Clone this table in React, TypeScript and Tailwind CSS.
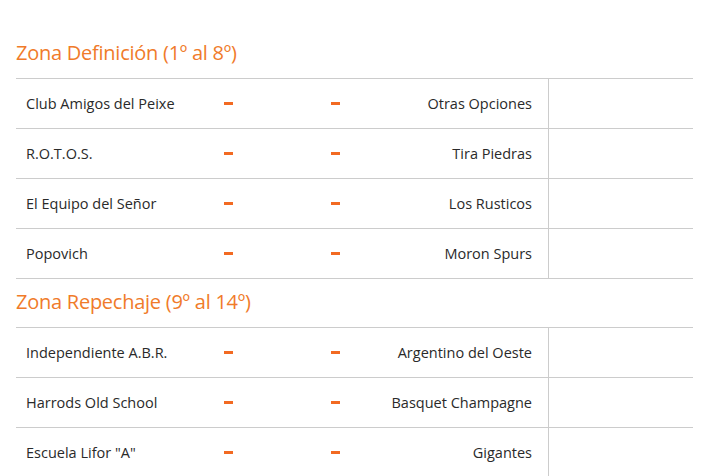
type Match = { home: string; away: string };

const zones: { title: string; matches: Match[] }[] = [
  {
    title: "Zona Definición (1º al 8º)",
    matches: [
      { home: "Club Amigos del Peixe", away: "Otras Opciones" },
      { home: "R.O.T.O.S.", away: "Tira Piedras" },
      { home: "El Equipo del Señor", away: "Los Rusticos" },
      { home: "Popovich", away: "Moron Spurs" },
    ],
  },
  {
    title: "Zona Repechaje (9º al 14º)",
    matches: [
      { home: "Independiente A.B.R.", away: "Argentino del Oeste" },
      { home: "Harrods Old School", away: "Basquet Champagne" },
      { home: "Escuela Lifor \"A\"", away: "Gigantes" },
    ],
  },
];

function Score() {
  return (
    <div className="flex items-center justify-center">
      <span className="block h-[3px] w-[9px] bg-[#f26a22]" aria-label="-" />
    </div>
  );
}

function Row({ home, away }: Match) {
  return (
    <div className="grid h-[50px] grid-cols-[190px_44px_63px_44px_191px_1fr] border-t border-[#cccccc] text-[14.5px] text-[#2a2a2a]">
      <div className="flex items-center pl-[10px]">{home}</div>
      <Score />
      <div />
      <Score />
      <div className="flex items-center justify-end pr-[16px]">{away}</div>
      <div className="border-l border-[#cccccc]" />
    </div>
  );
}

export default function App() {
  return (
    <div className="min-h-screen bg-white pt-[30px] pl-4 font-['Open_Sans',sans-serif]">
      <div className="w-[677px]">
        {zones.map((z) => (
          <section key={z.title}>
            <h2 className="pt-[9px] pb-[11px] text-[20px] leading-[28px] tracking-[-0.25px] text-[#f07b2a]">
              {z.title}
            </h2>
            <div className="border-b border-[#cccccc]">
              {z.matches.map((m) => (
                <Row key={m.home} {...m} />
              ))}
            </div>
          </section>
        ))}
      </div>
    </div>
  );
}
